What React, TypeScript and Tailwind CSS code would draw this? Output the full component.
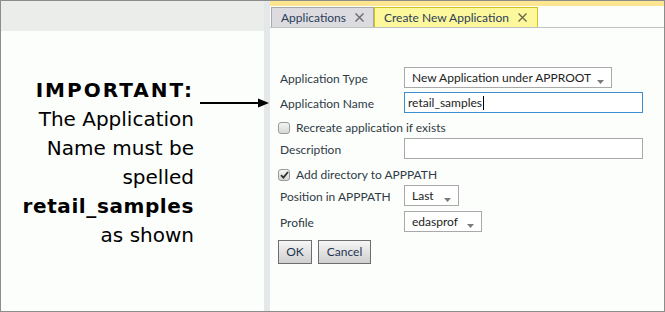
import type { ReactNode } from "react";

const ui = "font-['Segoe_UI','Lato','Noto_Sans',sans-serif] text-[12px]";

function Caret() {
  return (
    <svg width="7" height="4" viewBox="0 0 7 4" className="absolute right-[7px] top-[12px]">
      <path d="M0 0h7L3.5 4z" fill="#7a7a7a" />
    </svg>
  );
}

function Select({ value, width }: { value: string; width: string }) {
  return (
    <div className={`relative h-[21px] border border-[#a9a9a9] bg-white pl-[7px] leading-[19px] text-[#222] ${width}`}>
      {value}
      <Caret />
    </div>
  );
}

function CloseX({ color }: { color: string }) {
  return (
    <svg width="9" height="9" viewBox="0 0 9 9">
      <path d="M0.5 0.5l8 8M8.5 0.5l-8 8" stroke={color} strokeWidth="1.4" />
    </svg>
  );
}

function Row({ label, children }: { label: string; children: ReactNode }) {
  return (
    <div className="flex items-center">
      <span className="w-[124px] pt-[2px] text-[#2f3a46]">{label}</span>
      {children}
    </div>
  );
}

function Check({ checked, label }: { checked?: boolean; label: string }) {
  return (
    <div className="-ml-[2px] flex h-[16px] items-center gap-[6px] text-[#2f3a46]">
      <span className="flex h-[12px] w-[12px] items-center justify-center rounded-[3px] border border-[#9a9a9a] bg-gradient-to-b from-[#f4f4f4] to-[#d8d8d8]">
        {checked && (
          <svg width="9" height="8" viewBox="0 0 9 8">
            <path d="M1 4.2l2.4 2.4L8 1" stroke="#333" strokeWidth="1.8" fill="none" />
          </svg>
        )}
      </span>
      {label}
    </div>
  );
}

export default function App() {
  return (
    <div className="relative flex h-[312px] w-[665px] border border-[#8c8c8c] bg-[#fcfefb]">
      {/* left note */}
      <div className="flex w-[263px] flex-col">
        <div className="h-[30px] bg-[#ebedea]" />
        <div className="mt-[45px] w-[193px] text-right font-['DejaVu_Sans','Verdana',sans-serif] text-[20px] leading-[29px] text-black">
          <div className="font-bold tracking-[2px]">IMPORTANT:</div>
          <div>The Application</div>
          <div>Name must be</div>
          <div>spelled</div>
          <div className="font-bold tracking-[0.6px]">retail_samples</div>
          <div>as shown</div>
        </div>
      </div>
      <div className="w-[6px] bg-[#e5e8e9]" />

      {/* right panel */}
      <div className={`flex flex-1 flex-col ${ui}`}>
        <div className="h-[5px] bg-[#fde68f]" />
        <div className="mt-[2px] flex h-[20px] items-end border-b border-[#c2c2c2]">
          <div className="ml-[1px] flex h-[20px] w-[103px] items-center justify-between border border-b-0 border-[#a8a8a8] bg-[#dcdce0] pl-[9px] pr-[9px] text-[#2b3d5a]">
            Applications
            <CloseX color="#6a6a6a" />
          </div>
          <div className="flex h-[20px] w-[164px] items-center justify-between border border-b-0 border-[#d4c21c] bg-[#fdf89c] pl-[9px] pr-[10px] text-[#2b3d5a]">
            Create New Application
            <CloseX color="#6a6a4a" />
          </div>
        </div>

        <div className="mt-[39px] flex flex-col pl-[10px]">
          <Row label="Application Type">
            <Select value="New Application under APPROOT" width="w-[208px]" />
          </Row>
          <div className="mt-[4px]">
            <Row label="Application Name">
              <div className="flex h-[21px] w-[239px] items-center border border-[#3d8fd1] bg-white pl-[3px] text-[#222]">
                retail_samples
                <span className="ml-[1px] h-[14px] w-px bg-black" />
              </div>
            </Row>
          </div>
          <div className="mt-[7px]">
            <Check label="Recreate application if exists" />
          </div>
          <div className="mt-[2px]">
            <Row label="Description">
              <div className="h-[21px] w-[239px] border border-[#a9a9a9] bg-white" />
            </Row>
          </div>
          <div className="mt-[8px]">
            <Check checked label="Add directory to APPPATH" />
          </div>
          <div className="mt-[2px]">
            <Row label="Position in APPPATH">
              <Select value="Last" width="w-[55px]" />
            </Row>
          </div>
          <div className="mt-[5px]">
            <Row label="Profile">
              <Select value="edasprof" width="w-[78px]" />
            </Row>
          </div>
          <div className="-ml-[2px] mt-[8px] flex gap-[6px]">
            <button className="h-[24px] w-[34px] border border-[#6e6e6e] bg-gradient-to-b from-[#f6f6f6] to-[#cfcfcf] text-[#1f3550]">
              OK
            </button>
            <button className="h-[24px] w-[53px] border border-[#6e6e6e] bg-gradient-to-b from-[#f6f6f6] to-[#cfcfcf] text-[#1f3550]">
              Cancel
            </button>
          </div>
        </div>
      </div>

      {/* annotation arrow */}
      <svg width="72" height="10" viewBox="0 0 72 10" className="absolute left-[199px] top-[97px]">
        <path d="M0 5h60" stroke="#000" strokeWidth="2.2" />
        <path d="M58 0.5L69 5 58 9.5z" fill="#000" />
      </svg>
    </div>
  );
}
